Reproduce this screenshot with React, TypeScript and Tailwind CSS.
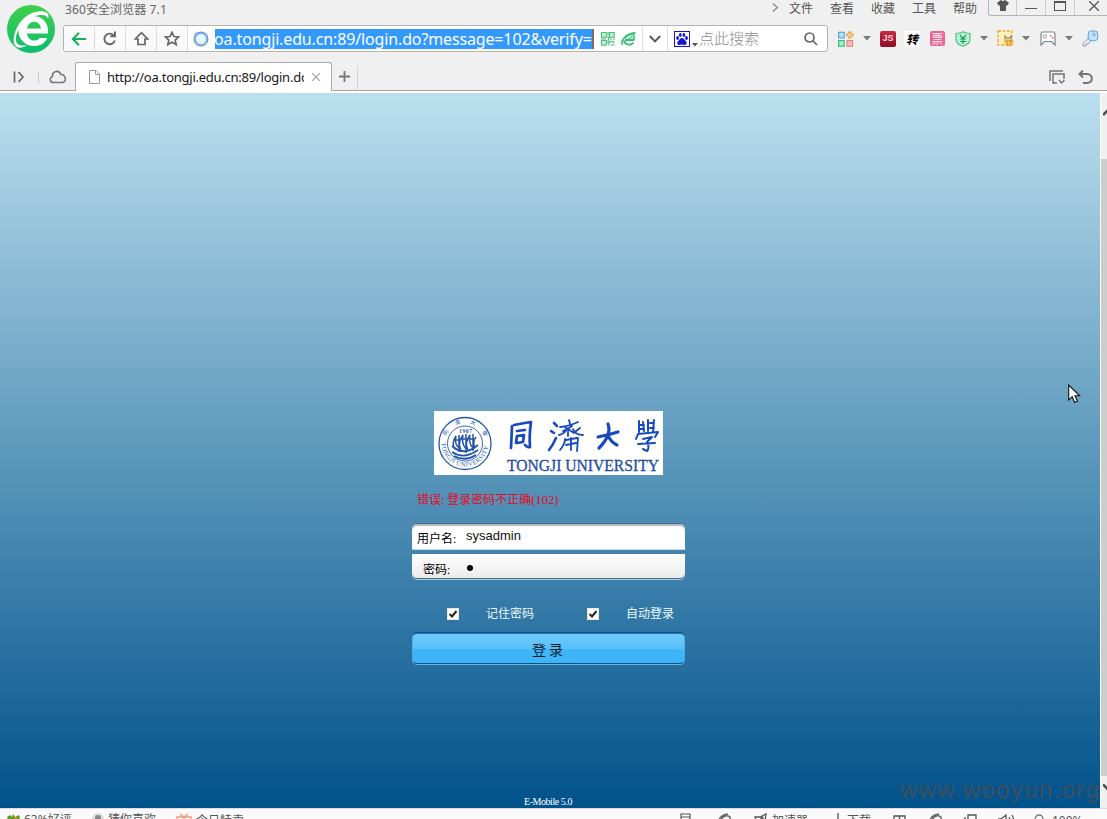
import React from "react";

const ui = "font-['Noto_Sans','Noto_Sans_CJK_SC',sans-serif]";
const cjk = "font-['Noto_Sans_CJK_SC',sans-serif]";
const song = "font-['Liberation_Serif','Noto_Sans_CJK_SC',serif]";

function Caret({ className = "" }: { className?: string }) {
  return (
    <svg className={`shrink-0 ${className}`} width="8" height="5" viewBox="0 0 8 5">
      <path d="M0 0h8L4 4.6z" fill="#7b7b7b" />
    </svg>
  );
}

function BrowserLogo() {
  return (
    <svg className="ml-[6px] mt-1 shrink-0" width="50" height="50" viewBox="0 0 50 50">
      <defs>
        <linearGradient id="lg" x1="0" y1="0" x2="0" y2="1">
          <stop offset="0" stopColor="#42cf49" />
          <stop offset="1" stopColor="#0bbd72" />
        </linearGradient>
      </defs>
      <circle cx="25" cy="25" r="24" fill="url(#lg)" />
      <path d="M17 29.500H42C43 19 36.500 12.300 28 12.300C19 12.300 12.500 19 12.500 27.500C12.500 36.500 19.500 42 28 42C34.500 42 39 39 41.300 34H33.500C32 36 30.500 36.600 28.500 36.600C24.500 36.600 21.500 34 21 29.500M21 24.500C22 20 24.500 17.700 28 17.700C31.800 17.700 34.300 20 35 24.500Z" fill="#fff" fillRule="evenodd" />
      <path d="M13 20C19 11 29 6.500 37.500 7.500C42 8.300 43.500 11.500 42 14.500C41 11.500 38 10.500 34 11C26 12 17 18 12 27C9 33 9 38 12.500 40.500C14.500 42 17.500 41.800 21 41C16 45 10.500 44.500 8.500 40.500C6.500 35.500 8.500 27 13 20Z" fill="#fff" />
      <path d="M12.200 31C13.500 36 16.500 39 20.500 41" fill="none" stroke="#18c066" strokeWidth="1.200" />
    </svg>
  );
}

function NavCell({ children }: { children: React.ReactNode }) {
  return <div className="flex w-[31px] shrink-0 items-center justify-center border-r border-[#dedede] bg-[#fafafa]">{children}</div>;
}

function QrIcon() {
  return (
    <svg className="shrink-0" width="14" height="14" viewBox="0 0 14 14" fill="none" stroke="#43bf75" strokeWidth="1.200">
      <rect x=".6" y=".6" width="4.600" height="4.600" /><rect x="8.500" y=".6" width="4.600" height="4.600" /><rect x=".6" y="8.500" width="4.600" height="4.600" />
      <path d="M2.200 3h1.500M10 3h1.600M2.200 11h1.500M7 0v3M6 5h1.500v3M0 7h5M9 7h2M12 7h2M7 9h2v2H7zM10.500 9.500h2v2M6.500 13h2M10 13h3.500" />
    </svg>
  );
}

function GreenE() {
  return (
    <svg className="ml-[6px] shrink-0" width="16" height="14" viewBox="0 0 16 14" fill="none" stroke="#39c27a" strokeWidth="2">
      <path d="M4 8H12.500L13.500 4.500M4 6.500C5 3.500 8 2 14 1.500M3 8.500C3.500 13 10 14 12.500 10.500" />
      <path d="M1.500 13C-1 8 6 1 14.500 .8" strokeWidth="1.500" /><path d="M3 10L13.500 3" strokeWidth="1.200" />
    </svg>
  );
}

function Baidu() {
  return (
    <svg className="ml-[6px] mt-[5px] shrink-0" width="16" height="16" viewBox="0 0 16 16">
      <rect x=".5" y=".5" width="15" height="15" fill="#fff" stroke="#1717bd" />
      <g fill="#1717d4"><ellipse cx="3.600" cy="7" rx="1.400" ry="1.900" /><ellipse cx="6.300" cy="4" rx="1.400" ry="2" /><ellipse cx="9.900" cy="4" rx="1.400" ry="2" /><ellipse cx="12.500" cy="7" rx="1.400" ry="1.900" /><path d="M8 7C10 7 10.500 9 12 10.200C13.500 11.800 12.500 14 10.500 14C9 13.500 7 13.500 5.500 14C3.500 14 2.500 11.800 4 10.200C5.500 9 6 7 8 7Z" /></g>
    </svg>
  );
}

function AddressBar() {
  return (
    <div className="flex h-[27px] w-[765px] shrink-0 overflow-hidden rounded-[3px] border border-[#b4b4b4] bg-white">
      <NavCell>
        <svg width="16" height="14" viewBox="0 0 16 14" fill="none" stroke="#16ae58" strokeWidth="2"><path d="M15 7H2M8 .8L1.800 7L8 13.200" /></svg>
      </NavCell>
      <NavCell>
        <svg width="14" height="15" viewBox="0 0 14 15" fill="none" stroke="#666" strokeWidth="1.900"><path d="M11.800 9.500A5.300 5.300 0 1 1 10.500 4.200M12 .5V5.200H7.300" /></svg>
      </NavCell>
      <NavCell>
        <svg width="15" height="15" viewBox="0 0 15 15" fill="none" stroke="#666" strokeWidth="1.700"><path d="M1.200 8L7.500 1.600L13.800 8H11V13.500H4V8Z" /></svg>
      </NavCell>
      <NavCell>
        <svg width="16" height="15" viewBox="0 0 16 15" fill="none" stroke="#666" strokeWidth="1.700"><path d="M8 1.300L10 5.500L14.600 6L11.200 9.100L12.200 13.600L8 11.300L3.800 13.600L4.800 9.100L1.400 6L6 5.500Z" /></svg>
      </NavCell>
      <div className="flex w-[455px] shrink-0 items-center border-r border-[#dedede]">
        <svg className="ml-1 shrink-0" width="18" height="18" viewBox="0 0 18 18">
          <circle cx="9" cy="9" r="6.500" fill="#cce6f7" stroke="#6f9fd3" strokeWidth="2" /><circle cx="9" cy="9" r="4.200" fill="#e9f8fd" /><path d="M2.500 5L5 2.500M13 3L15.500 6M3 13L6 15.500M12 15L15 12" stroke="#98b8dc" strokeWidth="1.500" />
        </svg>
        <div className={`ml-[5px] flex h-5 w-[379px] shrink-0 items-center overflow-hidden whitespace-nowrap border-r-2 border-[#806c60] bg-[#3399ff] text-[16px] leading-5 tracking-[-0.14px] text-white ${ui}`}>
          <span className="-ml-px">oa.tongji.edu.cn:89/login.do?message=102&amp;verify=</span>
        </div>
        <div className="ml-[7px] flex items-center"><QrIcon /><GreenE /></div>
      </div>
      <div className="flex w-[25px] shrink-0 items-center justify-center border-r border-[#dedede]">
        <svg width="12" height="8" viewBox="0 0 12 8" fill="none" stroke="#555" strokeWidth="1.900"><path d="M.8 1L6 6.300L11.200 1" /></svg>
      </div>
      <Baidu />
      <svg className="ml-[2px] mt-[17px] shrink-0" width="6" height="4" viewBox="0 0 6 4"><path d="M0 0h6L3 3.500z" fill="#555" /></svg>
      <span className={`ml-px w-[105px] text-[15px] leading-[24px] text-[#8c8c8c] ${cjk} font-light`}>点此搜索</span>
      <svg className="mt-[6px] shrink-0" width="14" height="14" viewBox="0 0 14 14" fill="none" stroke="#666" strokeWidth="1.700"><circle cx="5.500" cy="5.500" r="4.500" /><path d="M8.700 8.700L13 13" /></svg>
    </div>
  );
}

function Extensions() {
  return (
    <div className="ml-[10px] flex h-[27px] items-center">
      <svg className="shrink-0" width="16" height="16" viewBox="0 0 16 16" strokeWidth="1.200">
        <rect x=".6" y="1.300" width="5.600" height="5.600" fill="#bde1fb" stroke="#5aa7df" /><rect x=".6" y="9.600" width="5.600" height="5.600" fill="#a6edca" stroke="#39bf80" /><rect x="9" y="9.600" width="5.600" height="5.600" fill="#fbc0c0" stroke="#e98184" />
        <path d="M10.800 1h2v2h2v2h-2v2h-2v-2h-2v-2h2z" fill="#fff0ba" stroke="#e5a33f" />
      </svg>
      <Caret className="ml-[9px]" />
      <div className="ml-[9px] flex size-4 shrink-0 items-center justify-center rounded-[2px] bg-linear-to-b from-[#c72a45] to-[#8d0e22] font-['Liberation_Sans_Narrow','Liberation_Sans',sans-serif] text-[9px] font-bold text-[#ffd9df]">JS</div>
      <div className={`ml-2 flex size-4 shrink-0 items-center justify-center bg-white text-[12px] leading-4 font-bold italic text-black ${cjk}`}>转</div>
      <div className={`ml-[10px] flex size-[15px] shrink-0 items-center justify-center rounded-[2px] bg-[#ef6292] text-[12px] leading-[14px] text-[#fff0f5] ${cjk}`}>票</div>
      <svg className="ml-[10px] shrink-0" width="16" height="16" viewBox="0 0 16 16" fill="none">
        <path d="M8 .8C10 2 12 2.500 15 2.500V8C15 12 11 14.300 8 15.300C5 14.300 1 12 1 8V2.500C4 2.500 6 2 8 .8Z" fill="#b5f4cf" stroke="#59bd89" strokeWidth="1.200" /><path d="M5 4L8 7.500L11 4M8 7.500V13M5 8H11M5 10.500H11" stroke="#269b61" strokeWidth="1.200" />
      </svg>
      <Caret className="ml-[9px]" />
      <svg className="ml-[9px] shrink-0" width="17" height="17" viewBox="0 0 17 17" fill="none">
        <rect x="1" y="1" width="14" height="14" fill="#fff1bd" stroke="#e9ac41" strokeWidth="1.500" strokeDasharray="3 1.500" /><path d="M8 11V6L11 9L14 6V12" stroke="#a49568" strokeWidth="1.300" /><ellipse cx="12" cy="13" rx="4.500" ry="3" fill="#ed981f" /><path d="M9 12V15M12 11V15M15 12V15" stroke="#fff1ae" />
      </svg>
      <Caret className="ml-[8px]" />
      <svg className="ml-[10px] shrink-0" width="16" height="15" viewBox="0 0 16 15" fill="#fff">
        <path d="M2 1H14L15 3V14L11.500 10.500H4.500L1 14V3Z" stroke="#7d8492" strokeWidth="1.200" /><circle cx="4.800" cy="5.500" r="1.700" stroke="#9e8e7e" /><path d="M10 4h1.500v1.500H10zM12 6h1.500v1.500H12z" fill="#e35747" />
      </svg>
      <Caret className="ml-[9px]" />
      <svg className="ml-[9px] shrink-0" width="17" height="17" viewBox="0 0 17 17">
        <path d="M6.500 8L1 13.500V16H4V14H6L9 11" fill="#e5edf2" stroke="#929ba5" /><path d="M7 1.500Q11 0 15 1.500Q17 6 15 10Q11 12 7 10Q5 6 7 1.500Z" fill="#c0e4fd" stroke="#65a5da" /><circle cx="12" cy="4.500" r="1.200" fill="#fff" stroke="#619acc" />
      </svg>
    </div>
  );
}

function WindowControls() {
  return (
    <div className="ml-[11px] flex h-4 w-[130px] shrink-0 rounded-bl-[3px] border-b border-l border-[#b5b5b5]">
      <div className="flex w-7 justify-center border-r border-[#cacaca]"><svg width="14" height="11" viewBox="0 0 14 11"><path d="M3.500 1L5 0Q7 2 9 0L10.500 1L13 3L11 6L10 5V11H4V5L3 6L1 3Z" fill="#555" /></svg></div>
      <div className="flex w-[29px] items-start justify-center border-r border-[#cacaca]"><div className="mt-2 h-px w-3 bg-[#555]" /></div>
      <div className="flex w-[29px] items-start justify-center border-r border-[#cacaca]"><div className="mt-px h-[10px] w-3 border border-t-2 border-[#555]" /></div>
      <svg className="ml-[14px] mt-px shrink-0" width="10" height="10" viewBox="0 0 10 10"><path d="M0 0L10 10M10 0L0 10" stroke="#555" strokeWidth="1.300" /></svg>
    </div>
  );
}

function TabRow() {
  return (
    <div className="flex h-7 items-end border-b border-[#a8a3a3]">
      <div className="flex h-[27px] w-[75px] shrink-0 items-center">
        <svg className="ml-[13px]" width="12" height="12" viewBox="0 0 12 12" fill="none" stroke="#666" strokeWidth="1.700"><path d="M1.500 .5V11.500M5.500 1L10 6L5.500 11" /></svg>
        <div className="ml-[13px] h-3 w-px bg-[#c8c8c8]" />
        <svg className="ml-[10px]" width="18" height="14" viewBox="0 0 18 14" fill="none" stroke="#777" strokeWidth="1.600"><path d="M4.500 12.500C.5 12.500 .3 7.500 3.500 6.500C3 1 10 -.5 12 4.500C17 4.500 18 12.500 13 12.500Z" /></svg>
      </div>
      <div className="-mb-px flex h-[29px] w-[257px] shrink-0 items-center rounded-t-[3px] border border-b-0 border-[#aaa] bg-white">
        <svg className="ml-[13px] shrink-0" width="11" height="14" viewBox="0 0 11 14" fill="#fff" stroke="#999"><path d="M.5 .5H7L10.500 4V13.500H.5ZM6.500 .5V4.500H10.500" /></svg>
        <span className={`ml-[7px] w-[197px] shrink-0 overflow-hidden whitespace-nowrap text-[13px] leading-5 tracking-[-0.25px] text-[#171717] ${ui}`}>http://oa.tongji.edu.cn:89/login.do</span>
        <svg className="ml-[8px] shrink-0" width="8" height="8" viewBox="0 0 8 8"><path d="M0 0L8 8M8 0L0 8" stroke="#a2a2a2" strokeWidth="1.200" /></svg>
      </div>
      <div className="flex h-6 w-[26px] shrink-0 items-center justify-center border-r border-[#d2d2d2] pb-[3px]"><svg width="11" height="11" viewBox="0 0 11 11"><path d="M5.500 0V11M0 5.500H11" stroke="#777" strokeWidth="1.800" /></svg></div>
      <div className="ml-auto mr-[14px] flex h-[26px] items-center gap-3">
        <svg width="17" height="15" viewBox="0 0 17 15" fill="none" stroke="#747474" strokeWidth="1.500"><path d="M1 11V1H14M8 13H4V4H15V9" /><path d="M10 10L12.500 13L15.500 10" /></svg>
        <svg width="15" height="14" viewBox="0 0 15 14" fill="none" stroke="#747474" strokeWidth="2"><path d="M2 4H9C15.500 4 15.500 13 9 13H5M5 .5L1.500 4L5 7.500" /></svg>
      </div>
    </div>
  );
}

function BrowserChrome() {
  return (
    <header className="h-[93px] shrink-0 overflow-hidden border-b-2 border-white bg-[#f0f0f0]">
      <div className="flex h-[63px]">
        <div className="w-[63px] shrink-0"><BrowserLogo /></div>
        <div className="flex min-w-0 flex-1 flex-col">
          <div className="flex h-[25px] items-start">
            <span className={`ml-[2px] w-[707px] shrink-0 text-[12px] leading-[19px] tracking-[0.1px] text-[#666] ${ui}`}>360安全浏览器 7.1</span>
            <svg className="mt-[3px] shrink-0" width="7" height="9" viewBox="0 0 7 9"><path d="M.8 .5L5.500 4.500L.8 8.500" fill="none" stroke="#888" strokeWidth="1.300" /></svg>
            <div className={`ml-[10px] flex shrink-0 gap-[17px] whitespace-nowrap text-[12px] leading-[15px] text-[#555] ${cjk}`}>
              <span>文件</span><span>查看</span><span>收藏</span><span>工具</span><span>帮助</span>
            </div>
            <WindowControls />
          </div>
          <div className="flex"><AddressBar /><Extensions /></div>
        </div>
      </div>
      <TabRow />
    </header>
  );
}

function UniversityLogo() {
  return (
    <svg className="mx-auto block h-16 w-[229px] bg-white" viewBox="0 0 229 64">
      <defs><path id="rim" d="M7.500 32A23.500 23.500 0 0 0 54.500 32" /><path id="crown" d="M11 32A20 20 0 0 1 51 32" /></defs>
      <g fill="none" stroke="#2455ab">
        <circle cx="31" cy="32.500" r="26" strokeWidth="1.300" /><circle cx="31" cy="32.500" r="17.500" strokeWidth=".9" />
        <path d="M18 35Q30 46 44 34M18 41Q30 49 44 39M20 45Q31 51 42 44" strokeWidth="1.800" />
        <path d="M21 38Q17 32 22 25Q20 33 25 37M27 39Q23 32 29 24Q27 32 32 38M34 39Q30 32 36 24Q34 32 39 37M41 37Q38 31 42 26M20 29H26M27 28H33M35 28H41M25 24V41M32 23V42M39 23V40" strokeWidth="1.500" />
      </g>
      <g fill="#2455ab" className="font-['Liberation_Serif',serif]">
        <text fontSize="6.300"><textPath href="#rim" textLength="70" lengthAdjust="spacing">TONGJI UNIVERSITY</textPath></text>
        <text fontSize="5.500" className={cjk}><textPath href="#crown" startOffset="7" textLength="49" lengthAdjust="spacing">同濟大學</textPath></text>
        <text x="25" y="21.500" fontSize="5.500" fontWeight="700" textLength="13">1907</text>
        <text x="73" y="59.700" fontSize="17" stroke="#173d91" strokeWidth=".3" textLength="152" lengthAdjust="spacingAndGlyphs">TONGJI UNIVERSITY</text>
      </g>
      <g fill="none" stroke="#1749bd" strokeWidth="2.700" strokeLinecap="round" strokeLinejoin="round">
        <path d="M78 15L77 37M80 14Q90 12 97 11Q95 25 96 36Q94 37 91 34M83 20L91 19M83 25L82 32M83 25L90 24L89 31L83 32" />
        <path d="M120 12L123 15M117 20L120 22M115 39Q119 34 122 27" strokeWidth="2.600" />
        <path d="M126 16Q136 15 144 11M135 9L136 13M129 20Q134 18 138 15M131 16L140 22M125 24Q130 23 133 18M134 20L134 25M139 18Q141 24 149 24M141 21L146 17M131 28Q131 33 126 39M132 29L143 27M132 34L142 32M144 27L143 40M137 27L137 39" strokeWidth="1.800" />
        <path d="M164 26Q174 24 184 21M174 13Q178 24 165 37M174 25Q178 32 183 34" strokeWidth="3.200" />
        <path d="M205 10L205 21M209 11L210 20M214 9L214 20M220 9L219 21M205 14H210M205 18H210M216 12H220M216 17H220M204 23L202 28M204 23L224 21L221 26M209 28L218 26L213 31Q216 37 213 40L209 38M204 33L221 32" strokeWidth="2" />
      </g>
    </svg>
  );
}

function CheckOption({ label }: { label: string }) {
  return (
    <label className="flex w-[140px] shrink-0 items-center">
      <span className="flex size-3 shrink-0 items-center justify-center border border-[#eee6da] bg-white"><svg width="10" height="10" viewBox="0 0 10 10"><path d="M1.500 5L4 7.500L8.500 2" fill="none" stroke="#252525" strokeWidth="2" /></svg></span>
      <span className={`ml-[27px] whitespace-nowrap text-[12px] leading-4 text-[#edfaff] ${song}`}>{label}</span>
    </label>
  );
}

function LoginPage() {
  return (
    <main className="flex h-[715px] shrink-0">
      <div className="flex w-[1100px] shrink-0 flex-col bg-linear-to-b/srgb from-[#bbdfee] to-[#00528b]">
        <div className="ml-[412px] mt-[318px] w-[273px]">
          <UniversityLogo />
          <p className={`ml-[5px] mt-[17px] text-[12px] leading-4 text-[#e50a25] ${song}`}>错误: 登录密码不正确<span className="text-[12.5px]">(102)</span></p>
          <div className="mt-[16px] flex h-[26px] rounded-t-[5px] border-b border-[#bddbea] bg-white shadow-[inset_0_2px_1px_#b4b4b4,0_-1px_0_#3d719b]">
            <span className={`ml-[5px] mt-[7px] w-[49px] whitespace-nowrap text-[12px] leading-4 text-black ${song}`}>用户名:</span>
            <span className="mt-1 font-['Liberation_Sans',sans-serif] text-[13px] leading-4 text-[#111]">sysadmin</span>
          </div>
          <div className="mt-1 flex h-[25px] rounded-b-[5px] border-b border-[#356b90] bg-linear-to-b from-white to-[#ebebeb] shadow-[0_1px_0_#b5cddc]">
            <span className={`ml-[11px] mt-[8px] w-[44px] whitespace-nowrap text-[12px] leading-4 text-black ${song}`}>密码:</span>
            <span className="mt-[11px] size-[6px] rounded-full bg-black" />
          </div>
          <div className="ml-[35px] mt-[27px] flex"><CheckOption label="记住密码" /><CheckOption label="自动登录" /></div>
          <button className={`mt-[11px] flex h-[31px] w-full items-center justify-center rounded-[5px] border border-t-[#1876b9] border-r-[#4caee5] border-b-[#075280] border-l-[#4caee5] bg-linear-to-b from-[#70cafb] from-0% via-[#58c0fa] via-50% to-[#3db5f8] to-55% pr-[2px] text-[14px] leading-5 text-[#05182b] shadow-[0_1px_0_#69b5dc,0_-1px_0_#164f7c] ${cjk}`}>登 录</button>
        </div>
        <footer className="mt-auto grid h-[34px] grid-cols-[524px_376px_200px] items-end overflow-hidden">
          <span />
          <span className="whitespace-nowrap font-['Liberation_Serif',serif] text-[10px] leading-3 tracking-[-0.45px] text-white">E-Mobile 5.0</span>
          <span className="mb-[3px] whitespace-nowrap font-['Liberation_Sans',sans-serif] text-[24px] leading-[30px] tracking-[1.35px] text-[#404e5e]">www.wooyun.org</span>
        </footer>
      </div>
      <div className="flex w-[7px] flex-col overflow-hidden border-l border-white bg-[#f0f0f0]">
        <svg className="ml-[2px] mt-[15px] shrink-0" width="10" height="9" viewBox="0 0 10 9"><path d="M0 7L5 2L10 7" fill="none" stroke="#4b4b4b" strokeWidth="2.600" /></svg>
        <div className="mt-[42px] h-[617px] shrink-0 bg-[#cdcdcd]" />
        <svg className="ml-[2px] mt-[7px] shrink-0" width="10" height="9" viewBox="0 0 10 9"><path d="M0 1.500L5 6.500L10 1.500" fill="none" stroke="#4b4b4b" strokeWidth="2.600" /></svg>
      </div>
    </main>
  );
}

function StatusBar() {
  return (
    <footer className={`flex h-[11px] items-start overflow-hidden border-t border-[#ddd] bg-[#fafafa] text-[12px] leading-[18px] text-[#555] ${ui}`}>
      <svg className="ml-[6px] mt-[4px] shrink-0" width="15" height="12" viewBox="0 0 15 12"><path d="M1 4L4 2L6 4L7 1L9 4L13 2L14 5L11 9H3Z" fill="#599c20" /><path d="M8 4L12 5L9 7" fill="#d89b1e" /></svg>
      <span className="ml-[3px] mt-[2px] w-[67px] shrink-0 whitespace-nowrap">63%好评</span>
      <svg className="mt-[3px] shrink-0" width="14" height="14" viewBox="0 0 14 14"><circle cx="7" cy="7" r="6" fill="#ddd" /><circle cx="7" cy="6" r="3" fill="#888" /></svg>
      <span className="ml-[3px] mt-[2px] w-[68px] shrink-0 whitespace-nowrap">猜你喜欢</span>
      <svg className="mt-[3px] shrink-0" width="16" height="14" viewBox="0 0 16 14" fill="none" stroke="#ee9d78" strokeWidth="1.500"><path d="M1 5H15V13H1ZM8 5V13M8 5L4 2M8 5L12 2" /></svg>
      <span className="ml-[4px] mt-[3px] w-[484px] shrink-0 whitespace-nowrap">今日特卖</span>
      <div className="mt-[4px] flex w-[406px] shrink-0 items-start">
        <svg width="11" height="13" viewBox="0 0 11 13" fill="none" stroke="#555" strokeWidth="1.200"><path d="M1 1H10V12H1ZM1 4H10" /></svg>
        <svg className="ml-[27px]" width="14" height="14" viewBox="0 0 14 14" fill="none" stroke="#666" strokeWidth="1.500"><path d="M1 10C0 5 5 1 10 1M3 9C3 4 8 1 12 4V7H5M4 10H11" /></svg>
        <svg className="ml-[22px]" width="14" height="14" viewBox="0 0 14 14" fill="none" stroke="#555" strokeWidth="1.300"><path d="M1 4L6 4L12 1L11 8L7 12L6 8L2 7Z" /><circle cx="8" cy="5" r="1" /></svg>
        <span className="-mt-[1px] ml-[4px] w-[62px] whitespace-nowrap">加速器</span>
        <svg width="8" height="12" viewBox="0 0 8 12" fill="none" stroke="#555" strokeWidth="1.300"><path d="M4 0V10M1 7L4 10L7 7" /></svg>
        <span className="-mt-[1px] ml-[5px] w-[46px] whitespace-nowrap">下载</span>
        <svg width="13" height="12" viewBox="0 0 13 12" fill="none" stroke="#555" strokeWidth="1.300"><path d="M1 3H12V11H1ZM6.500 3V11" /></svg>
        <svg className="ml-[23px]" width="14" height="14" viewBox="0 0 14 14" fill="none" stroke="#666" strokeWidth="1.500"><path d="M1 10C0 5 5 1 10 1M3 9C3 4 8 1 12 4V7H5M4 10H11" /></svg>
        <svg className="ml-[21px]" width="13" height="12" viewBox="0 0 13 12" fill="none" stroke="#555" strokeWidth="1.300"><path d="M4 2H12V9H4ZM1 4V11H8" /></svg>
        <svg className="ml-[20px]" width="18" height="14" viewBox="0 0 18 14" fill="none" stroke="#555" strokeWidth="1.300"><path d="M1 6H4L9 2V12L4 8H1M12 4Q14 7 12 10M15 2Q18 7 15 12" /></svg>
        <svg className="ml-[19px] mt-px" width="12" height="13" viewBox="0 0 12 13" fill="none" stroke="#777" strokeWidth="1.300"><circle cx="5" cy="5" r="4" /><path d="M8 8L11 12" /></svg>
        <span className="-mt-px ml-[6px]">100%</span>
      </div>
    </footer>
  );
}

export default function App() {
  return (
    <div className="relative flex h-[819px] w-[1107px] flex-col overflow-hidden">
      <BrowserChrome />
      <LoginPage />
      <StatusBar />
      <svg className="absolute left-[1068px] top-[384px]" width="13" height="20" viewBox="0 0 13 20"><path d="M.7 1V16L4.200 12.700L6.700 18.500L9.500 17.200L7 11.800H11.700Z" fill="#fff" stroke="#111" strokeWidth="1.100" /></svg>
    </div>
  );
}
